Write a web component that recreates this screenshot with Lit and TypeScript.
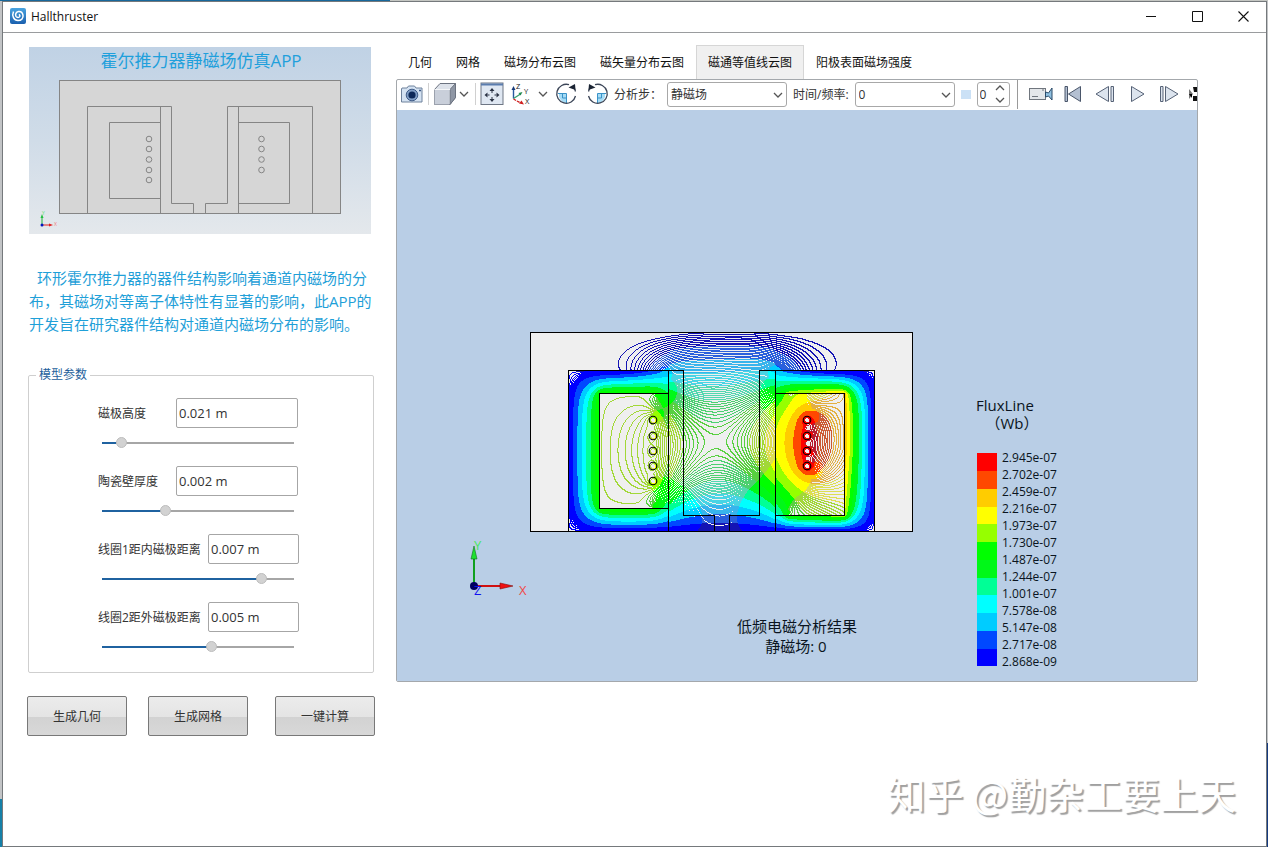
import { LitElement, html, svg, css } from "lit";
import { customElement, state } from "lit/decorators.js";
import { styleMap } from "lit/directives/style-map.js";
import { classMap } from "lit/directives/class-map.js";

const SCALE = ["#0000ff", "#0048ff", "#00ccff", "#00ffff", "#00ff96", "#00f818", "#00ff00", "#96ff00", "#ffff00", "#ffcc00", "#ff4800", "#ff0000"];
const SOFT = ["#1414b4", "#2a5fdc", "#38b4ec", "#48d4e4", "#52d8b0", "#4cd070", "#58d040", "#a2d838", "#dede50", "#e4b040", "#cc5a34", "#b81c30"];
const LABELS = ["2.945e-07", "2.702e-07", "2.459e-07", "2.216e-07", "1.973e-07", "1.730e-07", "1.487e-07", "1.244e-07", "1.001e-07", "7.578e-08", "5.147e-08", "2.717e-08", "2.868e-09"];

const W = 382;
const H = 200;
const LEFT_COIL = [88, 104, 119, 134, 149];
const RIGHT_COIL = [88, 104, 119, 134];

/** Relaxes the vector potential over the cross-section; values run from 0 to 12. */
function solveField(): Float64Array {
  const v = new Float64Array(W * H);
  const fixed = new Uint8Array(W * H);
  const pin = (x: number, y: number, value: number) => {
    v[y * W + x] = value;
    fixed[y * W + x] = 1;
  };
  for (let x = 0; x < W; x++) {
    pin(x, 0, 0);
    pin(x, H - 1, 0);
  }
  for (let y = 0; y < H; y++) {
    for (let x = 0; x <= 38; x++) pin(x, y, 0);
    for (let x = 344; x < W; x++) pin(x, y, 0);
  }
  for (let y = 0; y < 39; y++) {
    for (let x = 0; x < W; x++) {
      if (Math.pow(Math.abs(x - 199) / 121, 2.4) + Math.pow((39 - y) / 38.5, 2.4) > 1) pin(x, y, 0);
    }
  }
  for (let x = 38; x <= 136; x++) pin(x, 39, x < 84 ? 0 : 2.2 * Math.pow((x - 84) / 52, 2) + 0.003 * (x - 84));
  for (let x = 247; x <= 344; x++) pin(x, 39, x > 312 ? 0 : 2.2 * Math.pow((312 - x) / 65, 2) + 0.003 * (312 - x));
  for (let y = 61; y <= 176; y++) pin(69, y, 7);
  for (let x = 69; x <= 126; x++) {
    pin(x, 61, 7);
    pin(x, 176, 7);
  }
  for (let y = 61; y <= 183; y++) pin(315, y, y < 120 ? 9.4 : 9.4 - ((y - 120) / 63) * 1.6);
  for (let x = 256; x <= 315; x++) {
    pin(x, 61, 7.6 + ((x - 256) / 59) * 1.8);
    pin(x, 183, 6.5 + ((x - 256) / 59) * 1.3);
  }
  const disc = (cx: number, cy: number, value: number) => {
    for (let y = -2; y <= 2; y++) for (let x = -2; x <= 2; x++) if (x * x + y * y < 6) pin(cx + x, cy + y, value);
  };
  LEFT_COIL.forEach((y) => disc(123, y, 8));
  RIGHT_COIL.forEach((y) => disc(277, y, 11.9));
  for (let i = 0; i < 500; i++) {
    for (let y = 1; y < H - 1; y++) {
      for (let x = 1; x < W - 1; x++) {
        const k = y * W + x;
        if (fixed[k]) continue;
        const source = x > 145 && x < 240 && y > 70 && y < 160 ? 0.00005 : 0;
        v[k] += 1.94 * ((v[k - 1] + v[k + 1] + v[k - W] + v[k + W]) / 4 + source - v[k]);
      }
    }
  }
  return v;
}

/** One path per colour, made of horizontal one-pixel runs. */
function contourPaths(): { color: string; d: string }[] {
  const v = solveField();
  const density = 8.6;
  const runs = new Map<string, string[]>();
  for (let y = 0; y < H - 1; y++) {
    let start = 0;
    let current = "";
    for (let x = 0; x < W; x++) {
      const k = y * W + x;
      let color = "";
      if (x < W - 1) {
        const level = Math.floor(v[k] * density + 0.5);
        const dx = v[k + 1] - v[k];
        const dy = v[k + W] - v[k];
        const crossed = level !== Math.floor(v[k + 1] * density + 0.5) || level !== Math.floor(v[k + W] * density + 0.5);
        const inLeft = x > 69 && x < 138 && y > 61 && y < 176;
        const inRight = x > 245 && x < 315 && y > 61 && y < 183;
        const inRing = x > 38 && x < 344 && y > 39 && (x < 138 || x > 245) && !inLeft && !inRight;
        const solidSide = inRight && x < 277 && y < 150;
        const steep = Math.abs(dx) + Math.abs(dy) > (solidSide ? 0.08 : 0.12);
        if (crossed || ((inRing || solidSide) && steep)) {
          const shown = x > 138 && x < 245 ? v[k] * 1.1 : v[k];
          const band = Math.min(11, Math.max(0, Math.floor(shown)));
          color = steep || inRing ? SCALE[band] : SOFT[band];
        }
      }
      if (color !== current) {
        if (current) {
          if (!runs.has(current)) runs.set(current, []);
          runs.get(current)!.push(`M${start} ${y + 0.5}h${x - start}`);
        }
        current = color;
        start = x;
      }
    }
  }
  return [...runs].map(([color, parts]) => ({ color, d: parts.join("") }));
}

const CONTOURS = contourPaths();

const chevron = html`<svg class="chevron" width="10" height="6" viewBox="0 0 10 6"><path d="M1 1l4 4 4-4" fill="none" stroke="#555" stroke-width="1.3"/></svg>`;

@customElement("thruster-preview")
class ThrusterPreview extends LitElement {
  static styles = css`
    :host { display: block; }
    svg { display: block; width: 100%; height: auto; }
    .title { font: 17px "Open Sans", "Noto Sans CJK SC", sans-serif; fill: #1fa0dc; }
    .axis { font: 5px "Open Sans", sans-serif; }
  `;
  render() {
    return html`<svg viewBox="0 0 342 187" role="img" aria-label="霍尔推力器截面">
      <defs><linearGradient id="sky" x1="0" y1="0" x2="0" y2="1"><stop offset="0" stop-color="#c0d2e5"/><stop offset=".5" stop-color="#d0dce8"/><stop offset="1" stop-color="#e4e8ec"/></linearGradient></defs>
      <rect width="342" height="187" fill="url(#sky)"/>
      <text class="title" x="172" y="20" text-anchor="middle">霍尔推力器静磁场仿真APP</text>
      <g fill="none" stroke="#858585" stroke-width="1">
        <rect x="30.5" y="33.5" width="281" height="133" fill="#d6d6d6"/>
        <path d="M58.5 166V59.5h84V156.500h22V166M131.5 59v107M131.500 75.500h-51v76h51M176.500 166v-9.500h22V59.500h85V166M209.500 59v107M209.500 75.500h51v81h-51"/>
        ${[92, 102, 112.500, 123, 133].map((y) => svg`<circle cx="120" cy=${y} r="2.800"/>`)}
        ${[92, 102, 112.500, 123].map((y) => svg`<circle cx="232.500" cy=${y} r="2.800"/>`)}
      </g>
      <path d="M13 178v-8" stroke="#20b040"/><path d="M11.500 171l1.500-4 1.500 4z" fill="#20c040"/>
      <path d="M13 178h8" stroke="#e02020"/><path d="M20 176.500l4 1.500-4 1.500z" fill="#e02020"/>
      <circle cx="13" cy="178" r="1.500" fill="#0018c0"/>
      <text class="axis" x="25" y="179" fill="#f08080">X</text><text class="axis" x="13" y="168" fill="#60e070">Y</text>
    </svg>`;
  }
}

@customElement("flux-scene")
class FluxScene extends LitElement {
  static styles = css`
    :host { display: block; }
    svg { display: block; width: 100%; height: auto; background: #b9cee6; }
    .big { font: 15px "Open Sans", "Noto Sans CJK SC", sans-serif; fill: #0a1420; }
    .tick { font: 12px "Open Sans", sans-serif; fill: #0a1420; }
    .axis { font: 13px "Open Sans", sans-serif; }
  `;
  render() {
    return html`<svg viewBox="0 0 800 571" role="img" aria-label="磁通等值线云图">
      <g transform="translate(133 222)">
        <rect width="382" height="200" fill="#efefef"/>
        <g fill="none" shape-rendering="crispEdges">${CONTOURS.map((c) => svg`<path d=${c.d} stroke=${c.color}/>`)}</g>
        <g fill="none" stroke="#000" shape-rendering="crispEdges">
          <path d="M.5.500h382v199H.500zM38.500 199V38.500h115V183.500h31V199M138.500 38v161M138.500 61.500h-69v115h69M199.500 199v-15.500h30V38.500h115V199M245.500 38v161M245.500 61.500h69v122h-69"/>
        </g>
        <g fill="none" stroke="#000" stroke-width="1.100">
          ${LEFT_COIL.map((y) => svg`<circle cx="123" cy=${y} r="3.800"/>`)}
          ${RIGHT_COIL.map((y) => svg`<circle cx="277" cy=${y} r="3.800"/>`)}
        </g>
      </g>
      <path d="M77 476v-36" stroke="#10a020" stroke-width="2"/>
      <path d="M74 449l3-13 3 13z" fill="#20e030" stroke="#107020" stroke-width=".6"/>
      <path d="M77 476h30" stroke="#d01010" stroke-width="2"/>
      <path d="M103 473l13 3-13 3z" fill="#f01010" stroke="#801010" stroke-width=".6"/>
      <circle cx="77" cy="476" r="4" fill="#000060"/>
      <text class="axis" x="77" y="440" fill="#48e860">Y</text>
      <text class="axis" x="122" y="485" fill="#f04848">X</text>
      <text class="axis" x="77" y="485" fill="#1010f0">Z</text>
      <text class="big" x="400" y="522" text-anchor="middle">低频电磁分析结果</text>
      <text class="big" x="399" y="542" text-anchor="middle">静磁场: 0</text>
      <text class="big" x="579" y="301">FluxLine</text>
      <text class="big" x="615" y="319" text-anchor="middle">（Wb）</text>
      ${SCALE.map((c, i) => svg`<rect x="580" y=${Math.round(343 + ((11 - i) * 213) / 12)} width="20" height="18" fill=${c}/>`)}
      ${LABELS.map((t, i) => svg`<text class="tick" x="605" y=${352 + i * 17}>${t}</text>`)}
    </svg>`;
  }
}

interface Param { id: string; label: string; value: string; pos: number; long: boolean; }

@customElement("app-root")
class AppRoot extends LitElement {
  @state() private tab = 4;
  @state() private params: Param[] = [
    { id: "pole", label: "磁极高度", value: "0.021 m", pos: 75, long: false },
    { id: "wall", label: "陶瓷壁厚度", value: "0.002 m", pos: 320, long: false },
    { id: "coil1", label: "线圈1距内磁极距离", value: "0.007 m", pos: 850, long: true },
    { id: "coil2", label: "线圈2距外磁极距离", value: "0.005 m", pos: 575, long: true },
  ];

  static styles = css`
    :host { display: block; font: 12px/18px "Open Sans", "Noto Sans CJK SC", sans-serif; color: #333; }
    * { box-sizing: border-box; }
    button, input, select { font: inherit; color: inherit; margin: 0; }
    .desktop {
      display: flex; min-height: 100vh; padding: 1px 1px 0 2px;
      background:
        linear-gradient(90deg, #17689c 0 390px, #c4c6c2 390px) 0 0 / 100% 1px no-repeat,
        linear-gradient(#1580a8, #1580a8) 0 100% / 2px 48px no-repeat,
        linear-gradient(#143a80, #143a80) 100% 100% / 2px 104px no-repeat,
        #c2c4c6;
    }
    .window { position: relative; flex: 1; min-width: 0; background: #fff; border: 1px solid #75797c; }
    .titlebar { display: flex; align-items: center; height: 31px; padding: 0 0 2px 7px; border-bottom: 1px solid #9a9c9e; color: #111; }
    .titlebar .name { margin: 0 auto 0 5px; padding-top: 2px; }
    .caption { display: flex; align-items: center; justify-content: center; width: 46px; height: 28px; padding: 0; border: 0; background: none; }
    .main { display: grid; grid-template-columns: 348px minmax(0, 1fr); gap: 21px; padding: 12px 68px 0 24px; align-items: start; }
    .preview { margin: 2px 4px 0 2px; }
    .intro { margin: 33px 0 0 2px; font-size: 15px; line-height: 23px; color: #1fa0d8; white-space: nowrap; }
    .indent { padding-left: 8px; }
    .params { margin: 30px 1px 0; padding: 14px 0 2px 69px; border: 1px solid #cfcfcf; border-radius: 2px; min-width: 0; }
    .params legend { margin-left: -62px; padding: 0 3px; color: #245f9c; }
    .param { display: grid; grid-template-columns: 78px 122px; width: 200px; align-items: center; margin-bottom: 4px; }
    .param.long { grid-template-columns: 110px 91px; }
    .param label { padding-top: 2px; white-space: nowrap; }
    .field { width: 100%; height: 30px; padding: 0 2px; border: 1px solid #a6a6a6; border-radius: 2px; background: #fff; font-size: 13px; }
    .slider { grid-column: 1 / -1; width: 192px; height: 20px; margin: 5px 0 9px 4px; appearance: none; background: none; }
    .slider::-webkit-slider-runnable-track { height: 2px; background: linear-gradient(90deg, #1f62a0 var(--fill), #a6a6a6 var(--fill)); }
    .slider::-webkit-slider-thumb { appearance: none; width: 11px; height: 11px; margin-top: -5px; border: 1px solid #bdbdbd; border-radius: 50%; background: #d2d2d2; }
    .actions { display: flex; gap: 21px; margin-top: 23px; }
    .actions button { width: 100px; height: 40px; padding: 2px 0 0; border: 1px solid #787878; border-radius: 2px; background: linear-gradient(#ececec, #e4e4e4 52%, #d2d2d2 52%, #d8d8d8); }
    .actions button:last-child { margin-left: auto; }
    .tabs { display: flex; }
    .tab { height: 34px; padding: 0 11px; border: 1px solid transparent; border-bottom: 0; background: none; color: #111; white-space: nowrap; }
    .tab.active { background: #f0f0f0; border-color: #d6d6d6; }
    .viewer { border: 1px solid #a4a8ac; border-radius: 2px; overflow: hidden; }
    .toolbar { display: flex; align-items: center; height: 30px; padding: 0 0 2px 3px; overflow: hidden; white-space: nowrap; }
    .toolbar > * { flex: none; }
    .toolbar label { padding-top: 2px; }
    .tool { display: flex; align-items: center; justify-content: center; width: 24px; height: 28px; padding: 0; border: 0; background: none; }
    .tool.drop { width: 14px; }
    .play { width: 32px; }
    .rule { width: 1px; height: 22px; margin: 0 4px; background: #d0d0d0; }
    .rule.dark { height: 30px; margin: 0 7px; background: #9a9a9a; }
    .rotate { width: 32px; }
    .pick { position: relative; display: flex; width: 120px; margin: 0 6px 0 5px; }
    .pick.time { width: 100px; margin-left: 6px; }
    .pick select { appearance: none; width: 100%; height: 25px; padding: 2px 18px 0 3px; border: 1px solid #a8a8a8; border-radius: 3px; background: #fff; }
    .pick .chevron { position: absolute; right: 4px; top: 10px; pointer-events: none; }
    .swatch { width: 10px; height: 9px; margin-right: 6px; background: #cbe1f6; }
    .spin { display: flex; width: 33px; height: 25px; border: 1px solid #a8a8a8; border-radius: 3px; }
    .spin input { width: 15px; height: 23px; padding: 0 0 0 2px; border: 0; background: none; }
    .spin div { display: grid; }
    .spin button { display: flex; align-items: center; justify-content: center; width: 15px; height: 11px; padding: 0; border: 0; background: none; }
    .up .chevron { transform: rotate(180deg); }
    .watermark { position: absolute; right: 30px; bottom: 25px; margin: 0; font: 38px/56px "Noto Sans CJK SC", sans-serif; color: #fff; text-shadow: 2px 2px 1px #a0a0a0; pointer-events: none; }
  `;

  private slide(index: number, event: Event) {
    const pos = Number((event.target as HTMLInputElement).value);
    this.params = this.params.map((p, i) => (i === index ? { ...p, pos } : p));
  }

  private renderToolbar() {
    return html`<div class="toolbar" role="toolbar" aria-label="视图工具">
      <button class="tool" aria-label="截图">
        <svg width="24" height="20" viewBox="0 0 24 20"><path d="M2 4h5l1.500-2h6L16 4h6v14H1.500V5z" fill="#d4e2f2" stroke="#6f829c"/><circle cx="12" cy="11" r="5.800" fill="#7f9cc4" stroke="#405c88"/><circle cx="12" cy="11" r="3.600" fill="#0d2858"/><path d="M19 6.500h2" stroke="#405c88" stroke-width="1.500"/></svg>
      </button>
      <span class="rule"></span>
      <button class="tool" aria-label="视角"><svg width="24" height="24" viewBox="0 0 24 24"><path d="M1.500 7.500L7 1.500h15.500v14L17 22.500H1.500z" fill="#dde2ea" stroke="#6c7380"/><path d="M17 22.500v-15l5.500-6v14z" fill="#8f97a5" stroke="#6c7380"/><path d="M1.500 7.500h15v15h-15z" fill="#c9cfda"/><path d="M1.500 7.500H17" stroke="#f4f6f8"/></svg></button>
      <button class="tool drop" aria-label="更多视角">${chevron}</button>
      <span class="rule"></span>
      <button class="tool" aria-label="适应窗口"><svg width="24" height="24" viewBox="0 0 24 24"><rect x="1" y="1" width="22" height="21.500" fill="#dfe7f2" stroke="#6e7684"/><path d="M1 2.500h22" stroke="#5a7cae" stroke-width="2"/><g fill="#2a3244"><path d="M12 6l2.500 3h-5zM12 20l2.500-3h-5zM4.500 13l3-2.500v5zM19.500 13l-3-2.500v5z"/><path d="M11.500 9h1v2h-1zM11.500 15h1v2h-1zM7.500 12.500h2v1h-2zM14.500 12.500h2v1h-2z"/></g></svg></button>
      <button class="tool rotate" aria-label="坐标轴"><svg width="22" height="24" viewBox="0 0 22 24" font-family="Open Sans" font-size="7.500"><path d="M4.500 16.500V7" stroke="#2858a0" stroke-width="1.400"/><path d="M2.500 8l2-4 2 4z" fill="#173a78"/><path d="M4.500 16.500l7-4.500" stroke="#3aa070" stroke-width="1.400"/><path d="M9.500 11l4-1-2 3.500z" fill="#208850"/><path d="M4.500 17l7 4" stroke="#d02020" stroke-width="1.400" stroke-dasharray="3 1"/><path d="M10 21.500l5 1-2.500-4z" fill="#d02020"/><text x="7" y="7" fill="#222">Z</text><text x="15" y="12" fill="#222">Y</text><text x="16" y="22" fill="#222">X</text></svg></button>
      <button class="tool drop" aria-label="更多坐标轴">${chevron}</button>
      <button class="tool rotate" aria-label="顺时针旋转"><svg width="24" height="24" viewBox="0 0 24 24"><path d="M5 11.500h7.500V21A9 9 0 0 1 5 15z" fill="#a6dcf6"/><path d="M4 11.500h8.500V21M8.500 12v4h4" fill="none" stroke="#3a93c8"/><path d="M15 2.700A9.500 9.500 0 1 0 21.500 14M21.500 9.500l-1-3" fill="none" stroke="#3c4658" stroke-width="1.300"/><path d="M14.500 5.500L21 2l.5 6z" fill="#1b2434"/></svg></button>
      <button class="tool rotate" aria-label="逆时针旋转"><svg width="24" height="24" viewBox="0 0 24 24"><path d="M19 11.500h-7.500V21A9 9 0 0 0 19 15z" fill="#a6dcf6"/><path d="M20 11.500h-8.500V21M15.500 12v4h-4" fill="none" stroke="#3a93c8"/><path d="M9 2.700A9.500 9.500 0 1 1 2.500 14M2.500 9.500l1-3" fill="none" stroke="#3c4658" stroke-width="1.300"/><path d="M9.500 5.500L3 2l-.5 6z" fill="#1b2434"/></svg></button>
      <label for="step">分析步：</label>
      <span class="pick step"><select id="step"><option>静磁场</option></select>${chevron}</span>
      <label for="time">时间/频率:</label>
      <span class="pick time"><select id="time"><option>0</option></select>${chevron}</span>
      <span class="swatch"></span>
      <span class="spin"><input aria-label="帧" value="0" /><div><button class="up" aria-label="增加">${chevron}</button><button aria-label="减少">${chevron}</button></div></span>
      <span class="rule dark"></span>
      <button class="tool play" aria-label="录制"><svg width="26" height="16" viewBox="0 0 26 16"><rect x="1.500" y="2.500" width="16" height="11" fill="#e4e7ea" stroke="#70767e"/><path d="M4 10.500h6" stroke="#70767e"/><path d="M14 4h2" stroke="#70767e"/><path d="M17.500 6l3 1 3.500-5v12l-3.500-4-3 1z" fill="#8fc0e0" stroke="#2a4a68"/></svg></button>
      <button class="tool play" aria-label="第一帧"><svg width="20" height="18" viewBox="0 0 20 18"><path d="M2 1.500h2.500v15H2zM17.500 1.500v15L5.500 9z" fill="#b4c0d2" stroke="#4a566a"/></svg></button>
      <button class="tool play" aria-label="上一帧"><svg width="20" height="18" viewBox="0 0 20 18"><path d="M16 1.500h2.500v15H16zM13.500 1.500v15L1 9z" fill="#dce4ee" stroke="#566276"/></svg></button>
      <button class="tool play" aria-label="播放"><svg width="20" height="18" viewBox="0 0 20 18"><path d="M4.500 1.500v15L17 9z" fill="#dce4ee" stroke="#566276"/></svg></button>
      <button class="tool play" aria-label="下一帧"><svg width="20" height="18" viewBox="0 0 20 18"><path d="M1.500 1.500H4v15H1.500zM6.500 1.500v15L19 9z" fill="#dce4ee" stroke="#566276"/></svg></button>
      <button class="tool" aria-label="更多"><svg width="18" height="16" viewBox="0 0 18 16"><path d="M1 3l4 5-4 5z" fill="#777"/><path d="M1 8h3v4z" fill="#000"/><path d="M5 1h4v5H6zM5 10h4v5H5zM9 6h3v5H9z" fill="#111"/></svg></button>
    </div>`;
  }

  render() {
    const tabs = ["几何", "网格", "磁场分布云图", "磁矢量分布云图", "磁通等值线云图", "阳极表面磁场强度"];
    return html`<div class="desktop"><div class="window">
      <header class="titlebar">
        <svg width="16" height="16" viewBox="0 0 16 16"><defs><linearGradient id="logo" x1="0" y1="0" x2="0" y2="1"><stop offset="0" stop-color="#49a4e0"/><stop offset="1" stop-color="#1a5fae"/></linearGradient></defs><rect width="16" height="16" rx="2" fill="url(#logo)"/><path d="M3.500 3.500C1.500 8 4 12.500 8 12.500c3.500 0 5.500-2.500 5-5.300C12.500 4.500 10.500 3.300 8.500 3.500 6 3.800 5 6.500 6 8.300c1 1.500 3 1.500 3.700.2.400-1 0-1.800-.9-2" fill="none" stroke="#fff" stroke-width="1.500"/></svg>
        <span class="name">Hallthruster</span>
        <button class="caption" aria-label="最小化"><svg width="11" height="11" viewBox="0 0 11 11"><path d="M0 5.500h10" stroke="#111"/></svg></button>
        <button class="caption" aria-label="最大化"><svg width="11" height="11" viewBox="0 0 11 11"><path d="M.5.500h10v10H.500z" fill="none" stroke="#111"/></svg></button>
        <button class="caption" aria-label="关闭"><svg width="11" height="11" viewBox="0 0 11 11"><path d="M.5.500l10 10M10.500.500l-10 10" stroke="#111" stroke-width="1.100"/></svg></button>
      </header>
      <main class="main">
        <section>
          <thruster-preview class="preview"></thruster-preview>
          <p class="intro"><span class="indent">环形霍尔推力器的器件结构影响着通道内磁场的分</span><br />布，其磁场对等离子体特性有显著的影响，此APP的<br />开发旨在研究器件结构对通道内磁场分布的影响。</p>
          <fieldset class="params">
            <legend>模型参数</legend>
            ${this.params.map((p, i) => html`<div class=${classMap({ param: true, long: p.long })}>
              <label for=${p.id}>${p.label}</label>
              <input class="field" id=${p.id} .value=${p.value} />
              <input class="slider" type="range" min="0" max="1000" aria-label=${p.label} .value=${String(p.pos)} style=${styleMap({ "--fill": `${p.pos / 10}%` })} @input=${(e: Event) => this.slide(i, e)} />
            </div>`)}
          </fieldset>
          <div class="actions"><button>生成几何</button><button>生成网格</button><button>一键计算</button></div>
        </section>
        <section>
          <nav class="tabs" role="tablist">
            ${tabs.map((t, i) => html`<button role="tab" aria-selected=${i === this.tab} class=${classMap({ tab: true, active: i === this.tab })} @click=${() => (this.tab = i)}>${t}</button>`)}
          </nav>
          <div class="viewer">${this.renderToolbar()}<flux-scene></flux-scene></div>
        </section>
      </main>
      <p class="watermark">知乎 @勤杂工要上天</p>
    </div></div>`;
  }
}
